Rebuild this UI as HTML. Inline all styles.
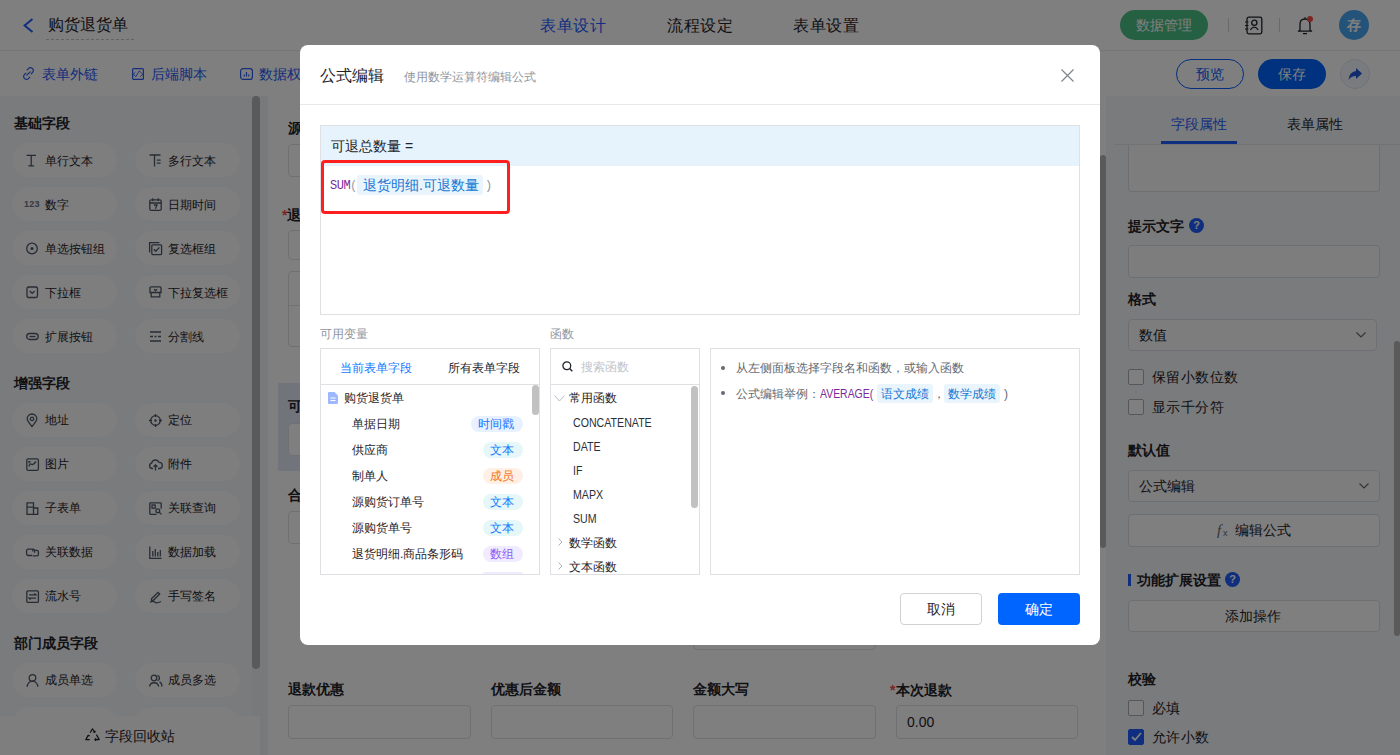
<!DOCTYPE html>
<html><head><meta charset="utf-8">
<style>
*{box-sizing:border-box;margin:0;padding:0}
html,body{width:1400px;height:755px;overflow:hidden;background:#fff;font-family:"Liberation Sans",sans-serif;color:#1f2329}
.a{position:absolute}
.t{position:absolute;white-space:nowrap;line-height:1}
svg{position:absolute;overflow:visible}
/* nav */
#nav{left:0;top:0;width:1400px;height:51px;background:#fff;border-bottom:1px solid #e8e9ec}
#tool{left:0;top:51px;width:1400px;height:45px;background:#fff}
#side{left:0;top:96px;width:252px;height:659px;background:#f5f6f8}
.pill{position:absolute;width:105px;height:34px;border-radius:17px;background:#fcfcfd}
.pill .t{font-size:12px;color:#1f2329;top:11px;left:33px}
.pill svg{left:12px;top:11px}
.sh{position:absolute;font-size:14px;font-weight:bold;left:14px;color:#1f2329}
#canvas{left:252px;top:96px;width:856px;height:659px;background:#f1f2f5}
#form{left:268px;top:96px;width:838px;height:659px;background:#fff}
.lbl{position:absolute;font-size:14px;font-weight:bold;color:#1f2329;line-height:1}
.inp{position:absolute;border:1px solid #dfe1e6;border-radius:4px;background:#fff}
#rp{left:1106px;top:96px;width:294px;height:659px;background:#f5f6f8}
.rl{position:absolute;font-size:14px;font-weight:bold;color:#1f2329;left:1128px;line-height:1}
.rin{position:absolute;left:1128px;width:252px;border:1px solid #dcdfe5;border-radius:4px;background:#fafbfc}
.cb{position:absolute;left:1128px;width:16px;height:16px;border:1px solid #a9aeb8;border-radius:2px;background:#fff}
#ov{left:0;top:0;width:1400px;height:755px;background:rgba(0,0,0,0.5)}
/* modal */
#modal{left:300px;top:45px;width:800px;height:600px;background:#fff;border-radius:8px}
.tag{position:absolute;border-radius:10px;font-size:12px;line-height:16px;height:16px;padding:0 7px}
.fn{position:absolute;font-size:12px;color:#1f2329;line-height:1;white-space:nowrap}
</style></head><body>

<!-- NAV -->
<div id="nav" class="a"></div>
<svg style="left:23px;top:18px" width="11" height="16" viewBox="0 0 11 16"><path d="M9.5 1 L1.6 7.5 L9.5 14" fill="none" stroke="#1f5cff" stroke-width="2"/></svg>
<div class="t" style="left:48px;top:16px;font-size:16px;color:#1f2329;line-height:18px">购货退货单</div>
<div class="a" style="left:46px;top:39px;width:88px;border-top:1px dashed #c4c7cc"></div>
<div class="t" style="left:540px;top:17px;font-size:16px;color:#1f5cff;line-height:18px;letter-spacing:0.5px">表单设计</div>
<div class="t" style="left:667px;top:17px;font-size:16px;color:#1f2329;line-height:18px;letter-spacing:0.5px">流程设定</div>
<div class="t" style="left:793px;top:17px;font-size:16px;color:#1f2329;line-height:18px;letter-spacing:0.5px">表单设置</div>
<div class="a" style="left:1120px;top:10px;width:88px;height:30px;border-radius:15px;background:#4dc086"></div>
<div class="t" style="left:1136px;top:17px;font-size:14px;color:#fff;line-height:16px">数据管理</div>
<div class="a" style="left:1228px;top:18px;width:1px;height:14px;background:#d0d3d9"></div>
<div class="a" style="left:1279px;top:18px;width:1px;height:14px;background:#d0d3d9"></div>
<svg style="left:1244px;top:16px" width="20" height="19" viewBox="0 0 20 19"><rect x="3" y="1.2" width="14.8" height="16.6" rx="1.8" fill="none" stroke="#1f2329" stroke-width="1.3"/><circle cx="10.3" cy="6.8" r="2.6" fill="none" stroke="#1f2329" stroke-width="1.3"/><path d="M6.4 13.8 Q10.3 8.6 14.2 13.8" fill="none" stroke="#1f2329" stroke-width="1.3"/><path d="M1 6h3.5M1 9.5h3.5M1 13h3.5" stroke="#1f2329" stroke-width="1.2"/></svg>
<svg style="left:1297px;top:16px" width="16" height="19" viewBox="0 0 16 19"><path d="M8 1.2v1.6" stroke="#1f2329" stroke-width="1.3"/><path d="M3 14 V8.5 Q3 3 8 3 Q13 3 13 8.5 V14 L14.6 15.2 H1.4 Z" fill="none" stroke="#1f2329" stroke-width="1.3" stroke-linejoin="round"/><path d="M6 17.6 H10" stroke="#1f2329" stroke-width="1.3"/></svg>
<div class="a" style="left:1307px;top:16px;width:6px;height:6px;border-radius:3px;background:#f54a45"></div>
<div class="a" style="left:1339px;top:10px;width:30px;height:30px;border-radius:15px;background:#48a6f5"></div>
<div class="t" style="left:1347px;top:18px;font-size:14px;color:#fff;line-height:14px;font-weight:bold">存</div>

<!-- TOOLBAR -->
<div id="tool" class="a"></div>
<svg style="left:22px;top:67px" width="13" height="13" viewBox="0 0 13 13"><path d="M5.2 2.8L6.6 1.4a2.6 2.6 0 0 1 3.7 0l.3.3a2.6 2.6 0 0 1 0 3.7L9.2 6.8M7.8 10.2L6.4 11.6a2.6 2.6 0 0 1-3.7 0l-.3-.3a2.6 2.6 0 0 1 0-3.7L3.8 6.2M4.8 8.2L8.2 4.8" fill="none" stroke="#2a5cf2" stroke-width="1.2" stroke-linecap="round"/></svg>
<div class="t" style="left:42px;top:67px;font-size:14px;color:#2459f7;line-height:14px">表单外链</div>
<svg style="left:132px;top:68px" width="12" height="12" viewBox="0 0 12 12"><rect x="0.6" y="0.6" width="10.8" height="10.8" rx="1" fill="none" stroke="#2a5cf2" stroke-width="1.2"/><path d="M3.3 4.3L1 6.3 4 8.6 7.2 2.8 10.8 6.3 8.2 8.6" fill="none" stroke="#2a5cf2" stroke-width="0.9"/></svg>
<div class="t" style="left:151px;top:67px;font-size:14px;color:#2459f7;line-height:14px">后端脚本</div>
<svg style="left:240px;top:68px" width="13" height="12" viewBox="0 0 13 12"><rect x="0.6" y="0.6" width="11.8" height="10.8" rx="2.5" fill="none" stroke="#2a5cf2" stroke-width="1.2"/><path d="M4.3 8.5V6.5M6.5 8.5V4M8.7 8.5V6.5" stroke="#2a5cf2" stroke-width="1.2"/></svg>
<div class="t" style="left:259px;top:67px;font-size:14px;color:#2459f7;line-height:14px">数据权限</div>
<div class="a" style="left:1176px;top:59px;width:68px;height:30px;border-radius:15px;border:1px solid #0a5cff;background:#fff"></div>
<div class="t" style="left:1196px;top:66px;font-size:14px;color:#0a5cff;line-height:16px">预览</div>
<div class="a" style="left:1258px;top:59px;width:68px;height:30px;border-radius:15px;background:#0064ff"></div>
<div class="t" style="left:1278px;top:66px;font-size:14px;color:#fff;line-height:16px">保存</div>
<div class="a" style="left:1340px;top:59px;width:30px;height:30px;border-radius:15px;border:1px solid #dfe4f2;background:#f4f7ff"></div>
<svg style="left:1347px;top:66px" width="16" height="16" viewBox="0 0 16 16"><path d="M9 2 L15 7.5 L9 13 V10 Q4 10 1.5 14 Q2 6 9 5 Z" fill="#2058d8"/></svg>

<!-- CANVAS -->
<div id="canvas" class="a"></div>
<div id="form" class="a"></div>
<div class="lbl" style="left:288px;top:121px">源购货单号</div>
<div class="inp" style="left:288px;top:144px;width:790px;height:33px"></div>
<div class="lbl" style="left:282px;top:208px"><span style="color:#f54a45">*</span>退货明细</div>
<div class="inp" style="left:288px;top:230px;width:790px;height:30px"></div>
<div class="inp" style="left:288px;top:271px;width:790px;height:76px;border-radius:4px"></div>
<div class="a" style="left:289px;top:305px;width:788px;height:1px;background:#e5e6eb"></div>
<div class="a" style="left:278px;top:383px;width:812px;height:88px;background:#e3e9f6"></div>
<div class="lbl" style="left:288px;top:399px">可退总数量</div>
<div class="inp" style="left:288px;top:423px;width:790px;height:33px"></div>
<div class="lbl" style="left:288px;top:488px">合计退货金额</div>
<div class="inp" style="left:288px;top:511px;width:790px;height:33px"></div>
<div class="inp" style="left:693px;top:560px;width:183px;height:90px"></div>
<div class="lbl" style="left:288px;top:682px">退款优惠</div>
<div class="lbl" style="left:491px;top:682px">优惠后金额</div>
<div class="lbl" style="left:693px;top:682px">金额大写</div>
<div class="lbl" style="left:890px;top:683px"><span style="color:#f54a45;margin-right:1px">*</span>本次退款</div>
<div class="inp" style="left:288px;top:705px;width:183px;height:34px"></div>
<div class="inp" style="left:491px;top:705px;width:182px;height:34px"></div>
<div class="inp" style="left:693px;top:705px;width:183px;height:34px"></div>
<div class="inp" style="left:896px;top:705px;width:182px;height:34px"></div>
<div class="t" style="left:907px;top:715px;font-size:14px;color:#1f2329">0.00</div>
<div class="a" style="left:1100px;top:155px;width:6px;height:393px;border-radius:3px;background:#b5b5b5"></div>

<!-- SIDEBAR -->
<div id="side" class="a"></div>
<div class="a" style="left:252px;top:96px;width:8px;height:573px;border-radius:4px;background:#b5b5b5"></div>
<div class="sh" style="top:115px">基础字段</div>
<div class="pill" style="left:12px;top:143px"><svg style="left:14px;top:11px" width="13" height="13" viewBox="0 0 13 13"><path d="M0.5 1.3h9.5M5.2 1.3v10.5M2.3 11.8h5.8" fill="none" stroke="#4e5969" stroke-width="1.3"/></svg><div class="t" style="left:33px;top:12px">单行文本</div></div>
<div class="pill" style="left:135px;top:143px"><svg style="left:14px;top:11px" width="13" height="13" viewBox="0 0 13 13"><path d="M0.5 1h11M5.5 1v11.5M7.8 6.2h3.8M7.8 9.2h3.8" fill="none" stroke="#4e5969" stroke-width="1.3"/></svg><div class="t" style="left:33px;top:12px">多行文本</div></div>
<div class="pill" style="left:12px;top:187px"><div class="t" style="left:12px;top:13px;font-size:9px;font-weight:bold;color:#687285;line-height:9px;font-family:'Liberation Sans',sans-serif;letter-spacing:0.2px">123</div><div class="t" style="left:33px;top:12px">数字</div></div>
<div class="pill" style="left:135px;top:187px"><svg style="left:14px;top:11px" width="13" height="13" viewBox="0 0 13 13"><rect x="0.8" y="1.8" width="11.4" height="10.6" rx="1.5" fill="none" stroke="#4e5969" stroke-width="1.3"/><path d="M0.8 5h11.4M3.8 0.3v3M9.2 0.3v3M4.8 7h3.2l-1.6 3.8" fill="none" stroke="#4e5969" stroke-width="1.3"/></svg><div class="t" style="left:33px;top:12px">日期时间</div></div>
<div class="pill" style="left:12px;top:231px"><svg style="left:14px;top:11px" width="13" height="13" viewBox="0 0 13 13"><circle cx="6" cy="6.5" r="5.3" fill="none" stroke="#4e5969" stroke-width="1.3"/><circle cx="6" cy="6.5" r="1.6" fill="#4e5969"/></svg><div class="t" style="left:33px;top:12px">单选按钮组</div></div>
<div class="pill" style="left:135px;top:231px"><svg style="left:14px;top:11px" width="13" height="13" viewBox="0 0 13 13"><path d="M0.6 10.5V0.6h9.8" fill="none" stroke="#4e5969" stroke-width="1.3"/><rect x="2.8" y="2.8" width="9.8" height="9.8" rx="1" fill="none" stroke="#4e5969" stroke-width="1.3"/><path d="M4.8 7.2l2 2 3.6-3.8" fill="none" stroke="#4e5969" stroke-width="1.3"/></svg><div class="t" style="left:33px;top:12px">复选框组</div></div>
<div class="pill" style="left:12px;top:275px"><svg style="left:14px;top:11px" width="13" height="13" viewBox="0 0 13 13"><rect x="1" y="1" width="10.5" height="10.5" rx="1.5" fill="none" stroke="#4e5969" stroke-width="1.3"/><path d="M3.8 5l2.4 2.4 2.4-2.4" fill="none" stroke="#4e5969" stroke-width="1.3"/></svg><div class="t" style="left:33px;top:12px">下拉框</div></div>
<div class="pill" style="left:135px;top:275px"><svg style="left:14px;top:11px" width="13" height="13" viewBox="0 0 13 13"><path d="M1 6.5V2a1.2 1.2 0 0 1 1.2-1.2h8.6A1.2 1.2 0 0 1 12 2v4.5zM2.2 6.5v4.3h8.6V6.5M5 3.3l1.5 1.3 1.5-1.3" fill="none" stroke="#4e5969" stroke-width="1.3"/></svg><div class="t" style="left:33px;top:12px">下拉复选框</div></div>
<div class="pill" style="left:12px;top:319px"><svg style="left:14px;top:11px" width="13" height="13" viewBox="0 0 13 13"><rect x="0.7" y="3.5" width="11.5" height="6" rx="3" fill="none" stroke="#4e5969" stroke-width="1.3"/><path d="M3.5 6.5h6" fill="none" stroke="#4e5969" stroke-width="1.3"/></svg><div class="t" style="left:33px;top:12px">扩展按钮</div></div>
<div class="pill" style="left:135px;top:319px"><svg style="left:14px;top:11px" width="13" height="13" viewBox="0 0 13 13"><path d="M1 2h11M1 6.5h3M5.5 6.5h2M9 6.5h3M1 11h11" fill="none" stroke="#4e5969" stroke-width="1.3"/></svg><div class="t" style="left:33px;top:12px">分割线</div></div>
<div class="sh" style="top:375px">增强字段</div>
<div class="pill" style="left:12px;top:403px"><svg style="left:14px;top:11px" width="13" height="13" viewBox="0 0 13 13"><path d="M6 12.5C3 9 1.2 6.8 1.2 4.8a4.8 4.8 0 0 1 9.6 0c0 2-1.8 4.2-4.8 7.7z" fill="none" stroke="#4e5969" stroke-width="1.3"/><circle cx="6" cy="4.9" r="1.7" fill="none" stroke="#4e5969" stroke-width="1.3"/></svg><div class="t" style="left:33px;top:11px">地址</div></div>
<div class="pill" style="left:135px;top:403px"><svg style="left:14px;top:11px" width="13" height="13" viewBox="0 0 13 13"><circle cx="6.5" cy="6.5" r="4.8" fill="none" stroke="#4e5969" stroke-width="1.3"/><circle cx="6.5" cy="6.5" r="1.2" fill="#4e5969"/><path d="M6.5 0v3M6.5 10v3M0 6.5h3M10 6.5h3" fill="none" stroke="#4e5969" stroke-width="1.3"/></svg><div class="t" style="left:33px;top:11px">定位</div></div>
<div class="pill" style="left:12px;top:447px"><svg style="left:14px;top:11px" width="13" height="13" viewBox="0 0 13 13"><rect x="0.8" y="0.8" width="11.6" height="11.6" rx="1.5" fill="none" stroke="#4e5969" stroke-width="1.3"/><path d="M2.8 8.5Q4 5 5.5 6.2T10 3.5M3 5.2v-1.6h1.6" fill="none" stroke="#4e5969" stroke-width="1.3"/></svg><div class="t" style="left:33px;top:11px">图片</div></div>
<div class="pill" style="left:135px;top:447px"><svg style="left:14px;top:11px" width="13" height="13" viewBox="0 0 13 13"><path d="M4 10.5H3.2A2.7 2.7 0 0 1 2.6 5.2 3.9 3.9 0 0 1 10 4.3a3 3 0 0 1 .4 6.2H9" fill="none" stroke="#4e5969" stroke-width="1.3"/><path d="M6.5 12.5V7M4.6 8.8l1.9-1.9 1.9 1.9" fill="none" stroke="#4e5969" stroke-width="1.3"/></svg><div class="t" style="left:33px;top:11px">附件</div></div>
<div class="pill" style="left:12px;top:491px"><svg style="left:14px;top:11px" width="13" height="13" viewBox="0 0 13 13"><path d="M1 0.8h6.5v11.6H1zM1 5.2h6.5M7.5 6h4.3v6.4H7.5" fill="none" stroke="#4e5969" stroke-width="1.3"/></svg><div class="t" style="left:33px;top:11px">子表单</div></div>
<div class="pill" style="left:135px;top:491px"><svg style="left:14px;top:11px" width="13" height="13" viewBox="0 0 13 13"><path d="M7.5 12.3H1.6a.8.8 0 0 1-.8-.8V1.6a.8.8 0 0 1 .8-.8h9.8a.8.8 0 0 1 .8.8v5.2" fill="none" stroke="#4e5969" stroke-width="1.3"/><rect x="3" y="3" width="3.2" height="3.2" fill="none" stroke="#4e5969" stroke-width="1.3"/><circle cx="8.8" cy="8.8" r="1.9" fill="none" stroke="#4e5969" stroke-width="1.3"/><path d="M10.2 10.2l2.2 2.2" fill="none" stroke="#4e5969" stroke-width="1.3"/></svg><div class="t" style="left:33px;top:11px">关联查询</div></div>
<div class="pill" style="left:12px;top:535px"><svg style="left:14px;top:11px" width="13" height="13" viewBox="0 0 13 13"><path d="M6.2 9.5H2a1.4 1.4 0 0 1-1.4-1.4V4.6A1.4 1.4 0 0 1 2 3.2h5.2A1.4 1.4 0 0 1 8.6 4.6v2.2M6.8 3.2V5.4M6.8 9.8h4.2a1.4 1.4 0 0 0 1.4-1.4V5.8a1.4 1.4 0 0 0-1.4-1.4H9" fill="none" stroke="#4e5969" stroke-width="1.3"/></svg><div class="t" style="left:33px;top:11px">关联数据</div></div>
<div class="pill" style="left:135px;top:535px"><svg style="left:14px;top:11px" width="13" height="13" viewBox="0 0 13 13"><path d="M0.8 0.5v11.8h11.8M3.8 5v5.5M6.3 3v7.5M8.8 6v4.5M11.3 4v6.5" fill="none" stroke="#4e5969" stroke-width="1.3"/></svg><div class="t" style="left:33px;top:11px">数据加载</div></div>
<div class="pill" style="left:12px;top:579px"><svg style="left:14px;top:11px" width="13" height="13" viewBox="0 0 13 13"><rect x="0.8" y="0.8" width="11.6" height="11.6" rx="1.2" fill="none" stroke="#4e5969" stroke-width="1.3"/><path d="M3 4.8h7L8.4 3.4M10 8.2H3l1.6 1.4" fill="none" stroke="#4e5969" stroke-width="1.3"/></svg><div class="t" style="left:33px;top:11px">流水号</div></div>
<div class="pill" style="left:135px;top:579px"><svg style="left:14px;top:11px" width="13" height="13" viewBox="0 0 13 13"><path d="M2.5 8.8L9 2.3l1.7 1.7-6.5 6.5H2.5z M1 12.3c2-1.2 3.5-1.2 5 0s3 .6 6-.8" fill="none" stroke="#4e5969" stroke-width="1.3"/></svg><div class="t" style="left:33px;top:11px">手写签名</div></div>
<div class="sh" style="top:635px">部门成员字段</div>
<div class="pill" style="left:12px;top:663px"><svg style="left:14px;top:11px" width="13" height="13" viewBox="0 0 13 13"><circle cx="6.5" cy="3.9" r="3.3" fill="none" stroke="#4e5969" stroke-width="1.3"/><path d="M1.2 12.8a5.3 5.6 0 0 1 10.6 0" fill="none" stroke="#4e5969" stroke-width="1.3"/></svg><div class="t" style="left:33px;top:11px">成员单选</div></div>
<div class="pill" style="left:135px;top:663px"><svg style="left:14px;top:11px" width="13" height="13" viewBox="0 0 13 13"><circle cx="5" cy="4" r="2.8" fill="none" stroke="#4e5969" stroke-width="1.3"/><path d="M0.5 12.5a4.7 4.7 0 0 1 9.2 0M8.5 1.3a2.8 2.8 0 0 1 0 5.4M10.5 7.8a4.6 4.6 0 0 1 2.3 4.7" fill="none" stroke="#4e5969" stroke-width="1.3"/></svg><div class="t" style="left:33px;top:11px">成员多选</div></div>
<div class="pill" style="left:12px;top:707px"></div>
<div class="pill" style="left:135px;top:707px"></div>
<div class="a" style="left:0;top:716px;width:260px;height:39px;background:#fcfcfd"></div>
<svg style="left:85px;top:728px" width="15" height="14" viewBox="0 0 15 14"><path d="M5.2 4.6L7.5 0.8 9.6 4.3M8.2 3.6l1.5.8.6-1.6M11.4 6.6l2.8 5H9.8M11.2 10.3l-1.4 1.3 1.3 1.2M4.8 11.6H0.8L3.2 7.4M2.2 8.8l1-1.4 1.5.5" fill="none" stroke="#1f2329" stroke-width="1.2" stroke-linejoin="round"/></svg>
<div class="t" style="left:105px;top:729px;font-size:14px;color:#1f2329;line-height:14px">字段回收站</div>


<!-- RIGHT PANEL -->
<div id="rp" class="a"></div>
<div class="a" style="left:1114px;top:144px;width:286px;height:1px;background:#e5e6eb"></div>
<div class="t" style="left:1171px;top:116px;font-size:14px;color:#1f5cff;line-height:16px">字段属性</div>
<div class="t" style="left:1287px;top:116px;font-size:14px;color:#1f2329;line-height:16px">表单属性</div>
<div class="a" style="left:1161px;top:141px;width:76px;height:3px;background:#1f5cff"></div>
<div class="rin" style="top:145px;height:47px;border-top:none;border-radius:0 0 4px 4px"></div>
<div class="rl" style="top:219px">提示文字</div>
<div class="a" style="left:1189px;top:218px;width:15px;height:15px;border-radius:8px;background:#1f5cff;color:#fff;font-size:11px;font-weight:bold;line-height:15px;text-align:center">?</div>
<div class="rin" style="top:245px;height:33px"></div>
<div class="rl" style="top:292px">格式</div>
<div class="rin" style="top:319px;height:32px;width:249px"></div>
<div class="t" style="left:1139px;top:328px;font-size:14px;color:#1f2329;line-height:14px">数值</div>
<svg style="left:1356px;top:332px" width="10" height="6" viewBox="0 0 10 6"><path d="M0.5 0.5L5 5 9.5 0.5" fill="none" stroke="#646a73" stroke-width="1.2"/></svg>
<div class="cb" style="top:369px"></div>
<div class="t" style="left:1152px;top:370px;font-size:14px;color:#1f2329;line-height:14px;letter-spacing:0.4px">保留小数位数</div>
<div class="cb" style="top:399px"></div>
<div class="t" style="left:1152px;top:400px;font-size:14px;color:#1f2329;line-height:14px;letter-spacing:0.4px">显示千分符</div>
<div class="rl" style="top:443px">默认值</div>
<div class="rin" style="top:470px;height:32px"></div>
<div class="t" style="left:1139px;top:479px;font-size:14px;color:#1f2329;line-height:14px">公式编辑</div>
<svg style="left:1359px;top:483px" width="10" height="6" viewBox="0 0 10 6"><path d="M0.5 0.5L5 5 9.5 0.5" fill="none" stroke="#646a73" stroke-width="1.2"/></svg>
<div class="rin" style="top:514px;height:33px;background:#fff"></div>
<svg style="left:1217px;top:522px" width="14" height="16" viewBox="0 0 14 16"><text x="0" y="12.5" font-size="15" font-style="italic" font-family="Liberation Serif" fill="#646a73">f</text><text x="6" y="13.5" font-size="9" font-family="Liberation Sans" fill="#646a73">x</text></svg>
<div class="t" style="left:1235px;top:523px;font-size:14px;color:#1f2329;line-height:14px">编辑公式</div>
<div class="a" style="left:1128px;top:574px;width:3px;height:12px;background:#1f5cff"></div>
<div class="rl" style="left:1137px;top:573px">功能扩展设置</div>
<div class="a" style="left:1225px;top:572px;width:15px;height:15px;border-radius:8px;background:#1f5cff;color:#fff;font-size:11px;font-weight:bold;line-height:15px;text-align:center">?</div>
<div class="rin" style="top:600px;height:32px;background:#fff"></div>
<div class="t" style="left:1225px;top:609px;font-size:14px;color:#1f2329;line-height:14px">添加操作</div>
<div class="rl" style="top:672px">校验</div>
<div class="cb" style="top:700px"></div>
<div class="t" style="left:1152px;top:701px;font-size:14px;color:#1f2329;line-height:14px;letter-spacing:0.4px">必填</div>
<div class="cb" style="top:729px;background:#1f5cff;border-color:#1f5cff"></div>
<svg style="left:1131px;top:732px" width="11" height="10" viewBox="0 0 11 10"><path d="M1 5l3 3 6-7" fill="none" stroke="#fff" stroke-width="1.8"/></svg>
<div class="t" style="left:1152px;top:730px;font-size:14px;color:#1f2329;line-height:14px;letter-spacing:0.4px">允许小数</div>
<div class="a" style="left:1394px;top:341px;width:6px;height:295px;border-radius:3px;background:#b5b5b5"></div>

<div id="ov" class="a"></div>

<!-- MODAL -->
<div id="modal" class="a"></div>
<div class="t" style="left:320px;top:67px;font-size:16px;color:#1f2329;line-height:18px">公式编辑</div>
<div class="t" style="left:404px;top:71px;font-size:12px;color:#8f959e;line-height:13px">使用数学运算符编辑公式</div>
<svg style="left:1061px;top:69px" width="13" height="13" viewBox="0 0 13 13"><path d="M0.5 0.5 L12.5 12.5 M12.5 0.5 L0.5 12.5" stroke="#80858d" stroke-width="1.2"/></svg>
<div class="a" style="left:300px;top:104px;width:800px;height:1px;background:#e8e9ec"></div>


<!-- editor -->
<div class="a" style="left:320px;top:125px;width:760px;height:190px;border:1px solid #dee0e3;background:#fff"></div>
<div class="a" style="left:321px;top:126px;width:758px;height:40px;background:#e6f3fd"></div>
<div class="t" style="left:331px;top:138px;font-size:14px;color:#1f2329;line-height:16px">可退总数量 =</div>
<div class="t" style="left:330px;top:180px;font-size:12px;color:#7b2a9b;font-family:'Liberation Mono',monospace;line-height:12px;letter-spacing:-0.5px">SUM<span style="color:#9a9ea6">(</span></div>
<div class="a" style="left:357px;top:175px;width:126px;height:20px;border-radius:3px;background:#e9f4fd"></div>
<div class="t" style="left:363px;top:178px;font-size:14px;color:#1677d2;line-height:14px">退货明细.可退数量</div>
<div class="t" style="left:485px;top:180px;font-size:12px;color:#8f959e;font-family:'Liberation Mono',monospace;line-height:12px">)</div>
<div class="a" style="left:321px;top:160px;width:189px;height:54px;border:3px solid #ff1f1f;border-radius:4px"></div>
<!-- variables -->
<div class="t" style="left:320px;top:328px;font-size:12px;color:#8f959e;line-height:13px">可用变量</div>
<div class="t" style="left:550px;top:328px;font-size:12px;color:#8f959e;line-height:13px">函数</div>
<div class="a" style="left:320px;top:348px;width:220px;height:227px;border:1px solid #dee0e3"></div>
<div class="a" style="left:321px;top:384px;width:218px;height:1px;background:#dee0e3"></div>
<div class="t" style="left:340px;top:362px;font-size:12px;color:#1677ff;line-height:13px">当前表单字段</div>
<div class="t" style="left:448px;top:362px;font-size:12px;color:#1f2329;line-height:13px">所有表单字段</div>
<svg style="left:328px;top:392px" width="10" height="12" viewBox="0 0 10 12"><path d="M0 1a1 1 0 0 1 1-1h5.5L10 3.5V11a1 1 0 0 1-1 1H1a1 1 0 0 1-1-1z" fill="#9db8ff"/><path d="M2.5 6h5M2.5 8.5h5" stroke="#fff" stroke-width="1"/></svg>
<div class="fn" style="left:344px;top:392px">购货退货单</div>
<div class="fn" style="left:352px;top:418px">单据日期</div>
<div class="tag" style="left:471px;top:416px;width:52px;background:#e8f1ff;color:#1677ff">时间戳</div>
<div class="fn" style="left:352px;top:444px">供应商</div>
<div class="tag" style="left:483px;top:442px;width:40px;background:#e6f7fa;color:#1677ff">文本</div>
<div class="fn" style="left:352px;top:470px">制单人</div>
<div class="tag" style="left:483px;top:468px;width:40px;background:#fff0e6;color:#f5731b">成员</div>
<div class="fn" style="left:352px;top:496px">源购货订单号</div>
<div class="tag" style="left:483px;top:494px;width:40px;background:#e6f7fa;color:#1677ff">文本</div>
<div class="fn" style="left:352px;top:522px">源购货单号</div>
<div class="tag" style="left:483px;top:520px;width:40px;background:#e6f7fa;color:#1677ff">文本</div>
<div class="fn" style="left:352px;top:548px">退货明细.商品条形码</div>
<div class="tag" style="left:483px;top:546px;width:40px;background:#f0ebff;color:#8e5cf7">数组</div>
<div class="a" style="left:483px;top:572px;width:40px;height:2px;border-radius:2px 2px 0 0;background:#f0ebff"></div>
<div class="a" style="left:532px;top:385px;width:7px;height:30px;border-radius:4px;background:#c1c1c1"></div>
<!-- functions -->
<div class="a" style="left:550px;top:348px;width:150px;height:227px;border:1px solid #dee0e3"></div>
<div class="a" style="left:551px;top:384px;width:148px;height:1px;background:#dee0e3"></div>
<svg style="left:562px;top:361px" width="11" height="11" viewBox="0 0 11 11"><circle cx="4.8" cy="4.8" r="3.9" fill="none" stroke="#1f2329" stroke-width="1.3"/><path d="M7.6 7.6L10.3 10.3" stroke="#1f2329" stroke-width="1.4"/></svg>
<div class="t" style="left:581px;top:361px;font-size:12px;color:#c0c4cc;line-height:13px">搜索函数</div>
<svg style="left:554px;top:395px" width="11" height="7" viewBox="0 0 11 7"><path d="M0.5 0.5L5.5 6 10.5 0.5" fill="none" stroke="#b8bcc2" stroke-width="1"/></svg>
<div class="fn" style="left:569px;top:392px">常用函数</div>
<div class="fn" style="left:573px;top:417px;font-size:12.5px;color:#2b2f36;transform:scaleX(0.85);transform-origin:0 0">CONCATENATE</div>
<div class="fn" style="left:573px;top:441px;font-size:12.5px;color:#2b2f36;transform:scaleX(0.85);transform-origin:0 0">DATE</div>
<div class="fn" style="left:573px;top:465px;font-size:12.5px;color:#2b2f36;transform:scaleX(0.85);transform-origin:0 0">IF</div>
<div class="fn" style="left:573px;top:489px;font-size:12.5px;color:#2b2f36;transform:scaleX(0.85);transform-origin:0 0">MAPX</div>
<div class="fn" style="left:573px;top:513px;font-size:12.5px;color:#2b2f36;transform:scaleX(0.85);transform-origin:0 0">SUM</div>
<svg style="left:558px;top:538px" width="5" height="8" viewBox="0 0 5 8"><path d="M0.5 0.5L4 4 0.5 7.5" fill="none" stroke="#b0b4ba" stroke-width="1"/></svg>
<div class="fn" style="left:569px;top:537px">数学函数</div>
<svg style="left:558px;top:562px" width="5" height="8" viewBox="0 0 5 8"><path d="M0.5 0.5L4 4 0.5 7.5" fill="none" stroke="#b0b4ba" stroke-width="1"/></svg>
<div class="fn" style="left:569px;top:561px">文本函数</div>
<div class="a" style="left:691px;top:386px;width:7px;height:122px;border-radius:4px;background:#c1c1c1"></div>
<!-- help -->
<div class="a" style="left:710px;top:348px;width:370px;height:227px;border:1px solid #dee0e3"></div>
<div class="a" style="left:721px;top:366px;width:4px;height:4px;border-radius:2px;background:#646a73"></div>
<div class="fn" style="left:736px;top:362px;color:#646a73">从左侧面板选择字段名和函数，或输入函数</div>
<div class="a" style="left:721px;top:391px;width:4px;height:4px;border-radius:2px;background:#646a73"></div>
<div class="fn" style="left:736px;top:388px;color:#646a73">公式编辑举例：<span style="color:#7b2a9b;display:inline-block;transform:scaleX(0.87);transform-origin:0 0">AVERAGE(</span></div>
<div class="a" style="left:877px;top:384px;width:56px;height:19px;border-radius:3px;background:#e9f4fd"></div>
<div class="fn" style="left:881px;top:388px;color:#1677d2">语文成绩</div>
<div class="fn" style="left:933px;top:388px;color:#646a73">，</div>
<div class="a" style="left:944px;top:384px;width:56px;height:19px;border-radius:3px;background:#e9f4fd"></div>
<div class="fn" style="left:948px;top:388px;color:#1677d2">数学成绩</div>
<div class="fn" style="left:1004px;top:388px;color:#646a73">)</div>
<!-- footer -->
<div class="a" style="left:900px;top:593px;width:82px;height:32px;border:1px solid #d0d3d6;border-radius:4px;background:#fff"></div>
<div class="t" style="left:927px;top:602px;font-size:14px;color:#1f2329;line-height:14px">取消</div>
<div class="a" style="left:998px;top:593px;width:82px;height:32px;border-radius:4px;background:#0065ff"></div>
<div class="t" style="left:1025px;top:602px;font-size:14px;color:#fff;line-height:14px">确定</div>
</body></html>
